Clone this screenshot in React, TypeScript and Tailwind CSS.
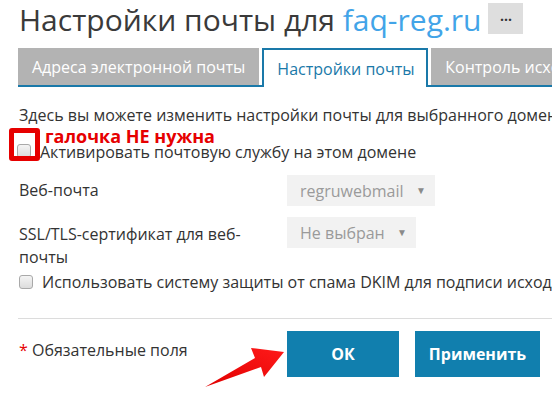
import React from 'react';

const font = { fontFamily: '"Open Sans", "Noto Sans", sans-serif' };

const Select = ({ value, width }: { value: string; width: string }) => (
  <div
    className={`${width} h-[31px] bg-[#f2f2f2] flex items-center justify-between pl-[13px] pr-[9px] text-[16px] text-[#9a9a9a]`}
  >
    <span>{value}</span>
    <span className="text-[10px] text-[#8a8a8a]">▼</span>
  </div>
);

const Checkbox = () => (
  <span className="inline-block w-[14px] h-[14px] rounded-[3px] border border-[#a9a9a9] bg-gradient-to-b from-[#f4f4f4] to-[#dcdcdc] shrink-0" />
);

const App: React.FC = () => {
  return (
    <div className="w-[552px] h-[393px] overflow-hidden bg-white text-[#333] relative" style={font}>
      <div className="pl-[18px] whitespace-nowrap">
        {/* title */}
        <div className="flex items-center h-[40px] pl-[1px]">
          <h1 className="text-[30px] leading-[40px] text-[#3a3a3a]">
            Настройки почты для <span className="text-[#42a4e8]">faq-reg.ru</span>
          </h1>
          <span className="ml-[7px] mt-[-4px] w-[35px] h-[31px] bg-[#dedede] flex items-center justify-center text-[#333] text-[14px] font-bold leading-none pb-[4px]">
            ...
          </span>
        </div>

        {/* tabs */}
        <div className="mt-[8px] flex items-end border-b-2 border-[#1a79a9] w-[600px]">
          <div className="h-[37px] px-[14px] bg-[#b3b3b3] text-white text-[16px] flex items-center mr-[3px] w-[244px]">
            Адреса электронной почты
          </div>
          <div className="h-[39px] -mb-[2px] px-[13px] bg-white border-2 border-b-0 border-[#1a79a9] text-[#1a79a9] text-[16px] flex items-center mr-[3px] w-[166px]">
            Настройки почты
          </div>
          <div className="h-[37px] px-[14px] bg-[#b3b3b3] text-white text-[16px] flex items-center">
            Контроль исходящей почты
          </div>
        </div>

        {/* body */}
        <p className="mt-[17px] pl-[1px] text-[16px] leading-[22px]">
          Здесь вы можете изменить настройки почты для выбранного домена
        </p>
        <div className="pl-[27px] -mt-[1px] text-[18px] font-bold text-[#e60000] leading-[22px]">
          галочка НЕ нужна
        </div>
        <div className="relative flex items-center h-[20px] -mt-[5px]">
          <span className="absolute left-[-9px] top-[-14px] w-[31px] h-[33px] border-[5px] border-[#e60000] rounded-[3px]" />
          <span className="ml-[-1px]"><Checkbox /></span>
          <span className="ml-[9px] text-[16px]">Активировать почтовую службу на этом домене</span>
        </div>

        <div className="mt-[13px] flex items-start pl-[1px]">
          <div className="w-[268px] text-[16px] leading-[22px] pt-[4px]">Веб-почта</div>
          <Select value="regruwebmail" width="w-[148px]" />
        </div>

        <div className="mt-[11px] flex items-start pl-[1px]">
          <div className="w-[268px] text-[16px] leading-[23px] pt-[6px] whitespace-normal pr-[30px]">
            SSL/TLS-сертификат для веб-почты
          </div>
          <Select value="Не выбран" width="w-[129px]" />
        </div>

        <div className="flex items-center h-[22px] mt-[2px] pl-[1px]">
          <Checkbox />
          <span className="ml-[9px] text-[16px]">
            Использовать систему защиты от спама DKIM для подписи исходящих писем
          </span>
        </div>

        <div className="mt-[25px] border-t border-[#dcdcdc] w-[540px]" />

        {/* footer */}
        <div className="mt-[12px] flex items-start pl-[1px]">
          <div className="w-[268px] text-[16px] pt-[7px]">
            <span className="text-[#e60000]">*</span> Обязательные поля
          </div>
          <button className="w-[112px] h-[46px] bg-[#117fae] text-white text-[16px] font-bold">
            ОК
          </button>
          <button className="ml-[16px] w-[125px] h-[46px] bg-[#117fae] text-white text-[16px] font-bold">
            Применить
          </button>
        </div>
      </div>

      {/* annotation arrow */}
      <svg className="absolute left-0 top-0" width="552" height="393" viewBox="0 0 552 393">
        <defs>
          <linearGradient id="ar" x1="0" y1="1" x2="1" y2="0">
            <stop offset="0" stopColor="#e00000" />
            <stop offset="1" stopColor="#ff1a1a" />
          </linearGradient>
        </defs>
        <polygon
          points="205,387 255,358 251,348 284,352 264,377 261,367"
          fill="url(#ar)"
        />
      </svg>
    </div>
  );
};

export default App;
